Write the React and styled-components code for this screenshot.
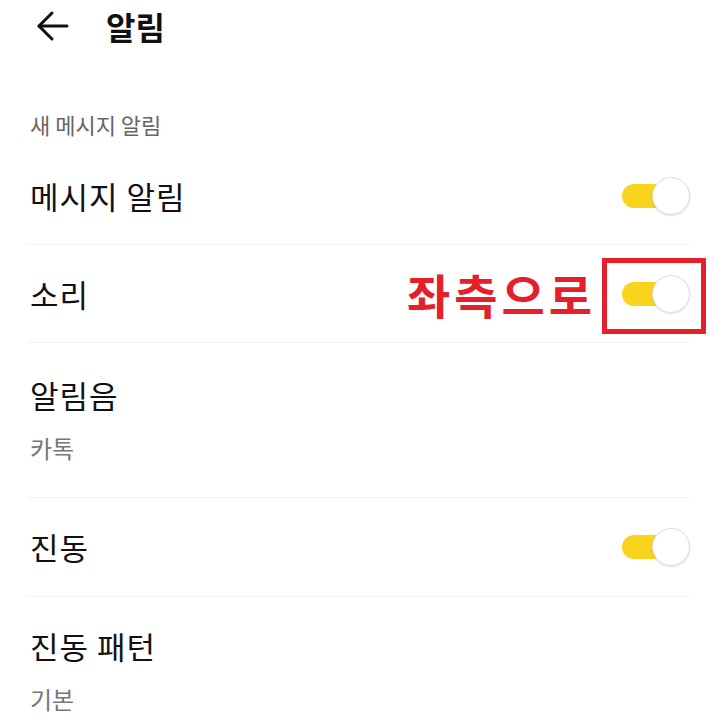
import React from 'react';
import styled, { createGlobalStyle } from 'styled-components';

const GlobalStyle = createGlobalStyle`
    body {
        margin: 0;
        background: #ffffff;
        font-family: "Noto Sans CJK KR", "Noto Sans", sans-serif;
        color: #111111;
    }
`

const Page = styled.div`
    width: 720px;
    height: 717px;
    overflow: hidden;
    background: #ffffff;
`

const Header = styled.div`
    height: 52px;
    display: flex;
    align-items: center;
    padding-left: 36px;
    gap: 36px;
`

const BackButton = styled.svg`
    width: 34px;
    height: 32px;
    display: block;
`

const Title = styled.h1`
    margin: 0;
    font-size: 32px;
    font-weight: 700;
    line-height: 40px;
    color: #111111;
`

const SectionLabel = styled.div`
    margin: 60px 0 0 30px;
    font-size: 22px;
    line-height: 24px;
    color: #666666;
`

const List = styled.div`
    margin: 12px 30px 0 28px;
`

const Row = styled.div`
    position: relative;
    display: flex;
    align-items: center;
    justify-content: space-between;
    height: ${p => p.$height || 96}px;
    padding-left: 2px;
    border-bottom: ${p => p.$last ? 'none' : '1px solid #f1f1f1'};
`

const TextRow = styled.div`
    display: flex;
    flex-direction: column;
    padding: ${p => p.$top || 32}px 0 34px 2px;
    gap: 18px;
    border-bottom: ${p => p.$last ? 'none' : '1px solid #f1f1f1'};
`

const Label = styled.div`
    font-size: 31px;
    line-height: 40px;
    letter-spacing: 1px;
    color: #111111;
`

const SubLabel = styled.div`
    font-size: 24px;
    line-height: 30px;
    color: #777777;
`

const Track = styled.div`
    position: relative;
    width: 68px;
    height: 38px;
    flex-shrink: 0;

    &::before {
        content: '';
        position: absolute;
        left: 0;
        top: 7px;
        width: 58px;
        height: 24px;
        border-radius: 12px;
        background: #f8d51c;
    }
`

const Knob = styled.div`
    position: absolute;
    right: 0;
    top: 0;
    width: 36px;
    height: 36px;
    border-radius: 50%;
    background: #ffffff;
    border: 1px solid #dedede;
    box-shadow: 0 1px 2px rgba(0, 0, 0, 0.12);
`

const Annotation = styled.div`
    position: absolute;
    right: 94px;
    top: 50%;
    transform: translateY(-50%);
    font-size: 47px;
    font-weight: 700;
    line-height: 50px;
    color: #e5202a;
    letter-spacing: 4px;
`

const Highlight = styled.div`
    position: absolute;
    right: -16px;
    top: 13px;
    width: 94px;
    height: 66px;
    border: 5px solid #e5202a;
`

function Toggle() {
    return (
        <Track>
            <Knob />
        </Track>
    )
}

function App() {
    return (
        <Page>
            <GlobalStyle />
            <Header>
                <BackButton viewBox="0 0 34 32" fill="none" stroke="#111" strokeWidth="3" strokeLinecap="round" strokeLinejoin="round">
                    <path d="M3 16 H31" />
                    <path d="M16 3 L3 16 L16 29" />
                </BackButton>
                <Title>알림</Title>
            </Header>
            <SectionLabel>새 메시지 알림</SectionLabel>
            <List>
                <Row>
                    <Label>메시지 알림</Label>
                    <Toggle />
                </Row>
                <Row $height={97}>
                    <Label>소리</Label>
                    <Toggle />
                    <Annotation>좌측으로</Annotation>
                    <Highlight />
                </Row>
                <TextRow>
                    <Label>알림음</Label>
                    <SubLabel>카톡</SubLabel>
                </TextRow>
                <Row $height={98}>
                    <Label>진동</Label>
                    <Toggle />
                </Row>
                <TextRow $top={29} $last>
                    <Label>진동 패턴</Label>
                    <SubLabel>기본</SubLabel>
                </TextRow>
            </List>
        </Page>
    )
}

export default App;
